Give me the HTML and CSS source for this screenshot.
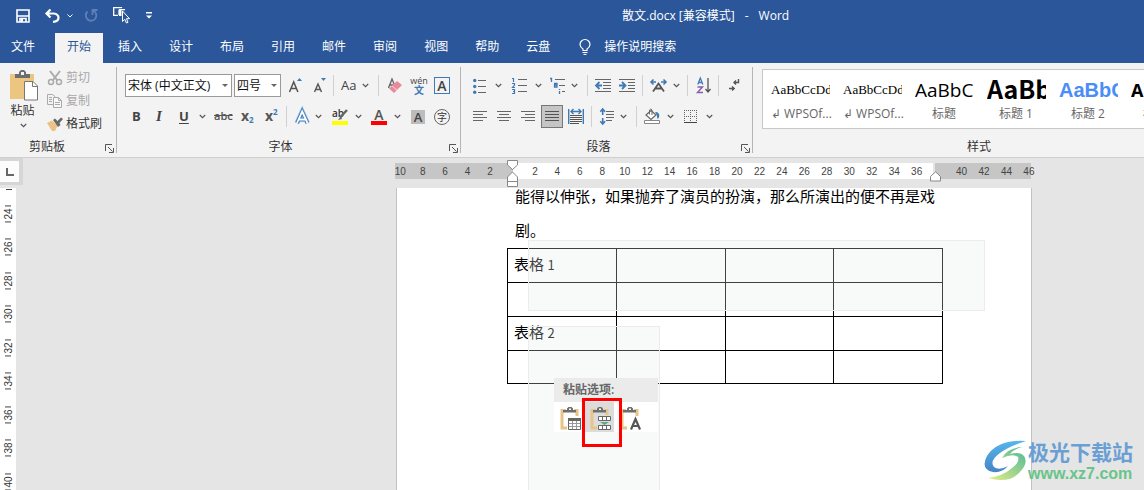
FILE: index.html
```html
<!DOCTYPE html>
<html lang="zh-CN">
<head>
<meta charset="utf-8">
<title>散文.docx - Word</title>
<link rel="stylesheet" href="styles.css">
</head>
<body>
<svg class="defs" aria-hidden="true">
  <symbol id="chev" viewBox="0 0 7 5"><path d="M.8 1l2.700 2.600L6.200 1" fill="none" stroke="#555" stroke-width="1.200"/></symbol>
  <symbol id="launch" viewBox="0 0 9 9"><path d="M.5 7V.5H7M3 3l4.500 4.500M8.500 4v4.500H4" fill="none" stroke="#555"/></symbol>
  <symbol id="clip" viewBox="0 0 22 24"><path d="M6 3.500H2v17.500H7M14 3.500h3V9" fill="none" stroke="#e9c487" stroke-width="3"/><path d="M3 5.500V3h4V1.500L8.500 0h3L13 1.500V3h3v2.500z" fill="#6e6e6e"/><path d="M9 1.500h2V3H9z" fill="#fff"/></symbol>
</svg>

<header class="top">
  <div class="titlebar">
    <div class="quick">
      <button aria-label="保存"><svg width="14" height="14" viewBox="0 0 14 14"><path d="M1 1h12v12H1z" fill="none" stroke="#fff" stroke-width="1.600"/><path d="M1 7h12M4 13v-3.500h6V13" fill="none" stroke="#fff" stroke-width="1.600"/><path d="M5 10h2v3H5z" fill="#fff"/></svg></button>
      <button aria-label="撤消"><svg width="15" height="14" viewBox="0 0 15 14"><path d="M5.500.5L1.500 4.500l4 4M2 4.500h6.500q5 .5 5 4.200T8 12.800" fill="none" stroke="#fff" stroke-width="2.200"/></svg></button>
      <button aria-label="撤消列表"><svg width="6" height="4" viewBox="0 0 6 4"><path d="M.5.5L3 3 5.500.5" fill="none" stroke="#fff"/></svg></button>
      <button aria-label="恢复"><svg width="15" height="15" viewBox="0 0 15 15"><path d="M9 2.500A5.300 5.300 0 1 1 3.500 3.500M8.500 7V2h5" fill="none" stroke="#5f80b5" stroke-width="1.800" transform="translate(-1 0)"/></svg></button>
      <button aria-label="选择对象"><svg width="17" height="17" viewBox="0 0 17 17"><path d="M8.500 1V.700H.700V8.300H5M6 2.700h6M6 2.700V8" fill="none" stroke="#fff" stroke-width="1.300"/><path d="M6 3h2.500v6H6z" fill="#fff"/><path d="M9.500 4v10.500l2.300-2.200 1.600 3.700 1.600-.7-1.500-3.600h3z" fill="#2b579a" stroke="#fff"/></svg></button>
      <button aria-label="自定义快速访问工具栏"><svg width="6" height="7" viewBox="0 0 6 7"><path d="M0 0h6v1.400H0zM0 3.500h6L3 6.500z" fill="#fff"/></svg></button>
    </div>
    <h1><span>散文.docx [兼容模式]</span><span>-</span><span>Word</span></h1>
  </div>
  <nav class="tabs">
    <button class="file">文件</button><button class="active">开始</button><button>插入</button><button>设计</button><button>布局</button><button>引用</button><button>邮件</button><button>审阅</button><button>视图</button><button>帮助</button><button>云盘</button>
    <button class="tell"><svg width="12" height="16" viewBox="0 0 12 16"><path d="M4 11.500V10Q1 8 1 5.500a5 5 0 0 1 10 0Q11 8 8 10v1.500z" fill="none" stroke="#fff" stroke-width="1.200"/><path d="M3.500 13.500h5M4.500 15.400h3" stroke="#fff"/></svg>操作说明搜索</button>
  </nav>
</header>

<section class="ribbon">
  <div class="group clipboard">
    <div class="clip-body">
      <button class="paste">
        <svg width="29" height="31" viewBox="0 0 29 31"><path d="M0 4h24v25H0z" fill="#ecc680"/><path d="M5 8V4h4V2l2-2h3l2 2v2h4v4z" fill="#6d6d6d"/><path d="M11 2h3v3h-3z" fill="#f3f3f3"/><path d="M14.500 11.500H23l4.500 4.500v14h-13z" fill="#fff" stroke="#777"/><path d="M22.500 12v4.500h5" fill="none" stroke="#777"/></svg>
        <span>粘贴</span>
        <svg class="chev" width="7" height="5"><use href="#chev"/></svg>
      </button>
      <div class="clip-list">
        <button disabled><svg width="16" height="16" viewBox="0 0 16 16"><path d="M3 1l7 9M13 1L6 10" stroke="#aaa" stroke-width="2"/><circle cx="4" cy="12" r="2.500" fill="none" stroke="#aaa" stroke-width="1.500"/><circle cx="12" cy="12" r="2.500" fill="none" stroke="#aaa" stroke-width="1.500"/></svg>剪切</button>
        <button disabled><svg width="16" height="16" viewBox="0 0 16 16"><path d="M6 11.500H.5V1.500h5L8.500 4M2 4.500h3M2 6.500h3M2 8.500h3" fill="none" stroke="#aaa"/><path d="M6.500 4.500h5l3 3v7h-8zM11.500 4.500v3h3M8 9.500h5M8 11.500h5" fill="#f8f8f8" stroke="#aaa"/></svg>复制</button>
        <button><svg width="16" height="14" viewBox="0 0 16 14"><path d="M0 6l5-2.500 5.500 5.500L8 14H5z" fill="#ecc286"/><path d="M6 3l2-1.500L10.500 4 14 .5 16 2l-3.500 4 1 2-2.500 2z" fill="#696969"/></svg>格式刷</button>
      </div>
    </div>
    <footer><span>剪贴板</span><button aria-label="剪贴板设置"><svg width="9" height="9"><use href="#launch"/></svg></button></footer>
  </div>

  <div class="group font">
    <div class="row font1">
      <label class="combo wide"><select aria-label="字体"><option>宋体 (中文正文)</option></select></label>
      <label class="combo size"><select aria-label="字号"><option>四号</option></select></label>
      <button aria-label="增大字号"><svg width="15" height="18" viewBox="0 0 15 18"><path d="M1.500 15L5.700 5l4.200 10M3 11.500h5.500" fill="none" stroke="#555" stroke-width="1.500"/><path d="M9 4h5l-2.500-3z" fill="#3f7ab5"/></svg></button>
      <button aria-label="减小字号"><svg width="15" height="18" viewBox="0 0 15 18"><path d="M1.500 15L5 7l3.500 8M3 12.500h4" fill="none" stroke="#555" stroke-width="1.400"/><path d="M8 1h5l-2.500 3z" fill="#3f7ab5"/></svg></button>
      <i class="sep"></i>
      <button class="case">Aa</button><button aria-label="大小写选项"><svg class="chev" width="7" height="5"><use href="#chev"/></svg></button>
      <i class="sep"></i>
      <button aria-label="清除格式"><svg width="16" height="17" viewBox="0 0 16 17"><path d="M1.500 11L5 2l2.500 6M3 8h3" fill="none" stroke="#666" stroke-width="1.400"/><path d="M2 11.500L10 4l5 4-8 8z" fill="#e88a99"/><path d="M5 9l5 4" stroke="#f8d8dc"/></svg></button>
      <button class="pinyin" aria-label="拼音指南"><span>wén</span><b>文</b></button>
      <button class="boxed" aria-label="字符边框">A</button>
    </div>
    <div class="row font2">
      <button class="bold">B</button><button class="ital">I</button><button class="under">U</button>
      <button aria-label="下划线选项"><svg class="chev" width="7" height="5"><use href="#chev"/></svg></button>
      <button class="strike">abc</button>
      <button class="script" aria-label="下标">x<sub>2</sub></button><button class="script" aria-label="上标">x<sup>2</sup></button>
      <i class="sep"></i>
      <button aria-label="文本效果"><svg width="15" height="16" viewBox="0 0 15 16"><path d="M2 14L7.200 2.500 12.500 14M4 10.500h6.500" fill="none" stroke="#9fc0e5" stroke-width="5"/><path d="M2 14L7.200 2.500 12.500 14M4 10.500h6.500" fill="none" stroke="#397abf" stroke-width="3.600"/><path d="M2 14L7.200 2.500 12.500 14M4 10.500h6.500" fill="none" stroke="#fff" stroke-width="1.800"/></svg></button>
      <button aria-label="文本效果选项"><svg class="chev" width="7" height="5"><use href="#chev"/></svg></button>
      <button class="hilite" aria-label="突出显示">ab<svg width="16" height="16" viewBox="0 0 16 16"><path d="M15 1L8 8.500" stroke="#666" stroke-width="2.500"/><path d="M9 7L6 11l4-1z" fill="#666"/><path d="M0 12h16v4H0z" fill="#ff0"/></svg></button>
      <button aria-label="突出显示选项"><svg class="chev" width="7" height="5"><use href="#chev"/></svg></button>
      <button class="color" aria-label="字体颜色">A</button>
      <button aria-label="字体颜色选项"><svg class="chev" width="7" height="5"><use href="#chev"/></svg></button>
      <button class="shade" aria-label="字符底纹">A</button>
      <button class="circle" aria-label="带圈字符">字</button>
    </div>
    <footer><span>字体</span><button aria-label="字体设置"><svg width="9" height="9"><use href="#launch"/></svg></button></footer>
  </div>

  <div class="group para">
    <div class="row para1">
      <button aria-label="项目符号"><svg width="14" height="16" viewBox="0 0 14 16"><g fill="#3f7ab5"><circle cx="1.700" cy="2.500" r="1.700"/><circle cx="1.700" cy="8.500" r="1.700"/><circle cx="1.700" cy="14.300" r="1.700"/></g><path d="M5 2.500h8M5 8.500h8M5 14.500h8" stroke="#666"/></svg></button>
      <button aria-label="项目符号选项"><svg class="chev" width="7" height="5"><use href="#chev"/></svg></button>
      <button aria-label="编号"><svg width="15" height="17" viewBox="0 0 15 17"><path d="M0 1.500h1.500V5M0 6.500h2.500v1.500L.5 10.500H3M0 12.500h2.500v4H0M1 14.500h1.500" fill="none" stroke="#3f7ab5" stroke-width="1.200"/><path d="M6 2.500h9M6 8.500h9M6 14.500h9" stroke="#666"/></svg></button>
      <button aria-label="编号选项"><svg class="chev" width="7" height="5"><use href="#chev"/></svg></button>
      <button aria-label="多级列表"><svg width="17" height="17" viewBox="0 0 17 17"><path d="M1 1.500h1.500V5M5 6.500h3V10H5.500V8H8M10.500 12v1M10.500 14v3" fill="none" stroke="#3f7ab5" stroke-width="1.300"/><path d="M6 2.500h10M10 8.500h6M13 14.500h3" stroke="#666"/></svg></button>
      <button aria-label="多级列表选项"><svg class="chev" width="7" height="5"><use href="#chev"/></svg></button>
      <i class="sep"></i>
      <button aria-label="减少缩进"><svg width="17" height="13" viewBox="0 0 17 13"><path d="M0 .5h16M8 3.500h8M8 6.500h8M8 9.500h8M0 12.500h16" stroke="#666"/><path d="M7 6.500H1.500M4.500 3L1 6.500 4.500 10" fill="none" stroke="#3f7ab5" stroke-width="1.800"/></svg></button>
      <button aria-label="增加缩进"><svg width="17" height="13" viewBox="0 0 17 13"><path d="M0 .5h16M9 3.500h7M9 6.500h7M9 9.500h7M0 12.500h16" stroke="#666"/><path d="M0 6.500h6M3 3l3.500 3.500L3 10" fill="none" stroke="#3f7ab5" stroke-width="1.800"/></svg></button>
      <i class="sep"></i>
      <button aria-label="中文版式"><svg width="17" height="13" viewBox="0 0 17 13"><path d="M3 12.500L8.500 4.500l5.500 8M5 9.500h7" fill="none" stroke="#555" stroke-width="1.800"/><path d="M1 3h5M3.500.5L1 3l2.500 2.500M16 3h-5M13.500.5L16 3l-2.500 2.500" fill="none" stroke="#3f7ab5" stroke-width="1.600"/></svg></button>
      <button aria-label="中文版式选项"><svg class="chev" width="7" height="5"><use href="#chev"/></svg></button>
      <i class="sep"></i>
      <button aria-label="排序"><svg width="15" height="17" viewBox="0 0 15 17"><path d="M.8 7.500L3.300 1l2.500 6.500M1.500 5.500H5" fill="none" stroke="#3f7ab5" stroke-width="1.300"/><path d="M.5 10h5l-5 5.500h5.500" fill="none" stroke="#8a5bb0" stroke-width="1.400"/><path d="M11 1v14M8.500 12l2.500 3 2.500-3" fill="none" stroke="#555" stroke-width="1.300"/></svg></button>
      <i class="sep"></i>
      <button aria-label="显示编辑标记"><svg width="12" height="13" viewBox="0 0 12 13"><path d="M9.500 0v3.500H5M7 1.500l-2 2 2 2M0 9.500h5M3 7.500l2.200 2L3 11.500" fill="none" stroke="#555" stroke-width="1.400"/></svg></button>
    </div>
    <div class="row para2">
      <button aria-label="左对齐"><svg width="14" height="11" viewBox="0 0 14 11"><path d="M0 .5h14M0 3.500h10M0 6.500h14M0 9.500h10" stroke="#666"/></svg></button>
      <button aria-label="居中"><svg width="14" height="11" viewBox="0 0 14 11"><path d="M0 .5h14M2 3.500h10M0 6.500h14M2 9.500h10" stroke="#666"/></svg></button>
      <button aria-label="右对齐"><svg width="14" height="11" viewBox="0 0 14 11"><path d="M0 .5h14M4 3.500h10M0 6.500h14M4 9.500h10" stroke="#666"/></svg></button>
      <button class="selected" aria-label="两端对齐"><svg width="14" height="11" viewBox="0 0 14 11"><path d="M0 .5h14M0 3.500h14M0 6.500h14M0 9.500h14" stroke="#555"/></svg></button>
      <button aria-label="分散对齐"><svg width="17" height="15" viewBox="0 0 17 15"><path d="M.7 0v15M15.300 0v15M3 2.500h10M5.500 0L3 2.500 5.500 5M10.500 0L13 2.500 10.500 5" fill="none" stroke="#3f7ab5" stroke-width="1.400"/><path d="M2 6.500h12M2 8.500h12M2 10.500h12M2 12.500h12M2 14.500h9" stroke="#555"/></svg></button>
      <i class="sep"></i>
      <button aria-label="行距"><svg width="15" height="15" viewBox="0 0 15 15"><path d="M2.700 0v6M.3 2.700L2.700 0l2.400 2.700M2.700 9v6M.3 12.300L2.700 15l2.400-2.700" fill="none" stroke="#3f7ab5" stroke-width="1.600"/><path d="M6 2.500h8M6 5.500h8M6 8.500h8M6 11.500h6" stroke="#666"/></svg></button>
      <button aria-label="行距选项"><svg class="chev" width="7" height="5"><use href="#chev"/></svg></button>
      <i class="sep"></i>
      <button aria-label="底纹"><svg width="17" height="15" viewBox="0 0 17 15"><path d="M2 6L7 1.500l5 4.500-5 4.500z" fill="#fff" stroke="#666" stroke-width="1.200"/><path d="M5.500 5.500V1Q6.500-1 8 1v5" fill="none" stroke="#666"/><path d="M11 3q5.500 0 4 5.500L13.500 10Q13.500 6 11 3z" fill="#3f7ab5"/><path d="M.5 11.500h15v3H.5z" fill="#fff" stroke="#888"/></svg></button>
      <button aria-label="底纹选项"><svg class="chev" width="7" height="5"><use href="#chev"/></svg></button>
      <button aria-label="边框"><svg width="13" height="13" viewBox="0 0 13 13"><path d="M0 .5h13M0 6.500h13M.5 0v12M6.500 0v12M12.500 0v12" stroke="#666" stroke-dasharray="1 1"/><path d="M0 12.500h13" stroke="#444"/></svg></button>
      <button aria-label="边框选项"><svg class="chev" width="7" height="5"><use href="#chev"/></svg></button>
    </div>
    <footer><span>段落</span><button aria-label="段落设置"><svg width="9" height="9"><use href="#launch"/></svg></button></footer>
  </div>

  <div class="group styles">
    <div class="gallery">
      <button><span class="sample serif">AaBbCcDd</span><span class="name">↲ WPSOf...</span></button>
      <button><span class="sample serif">AaBbCcDd</span><span class="name">↲ WPSOf...</span></button>
      <button><span class="sample title">AaBbC</span><span class="name">标题</span></button>
      <button><span class="sample h1">AaBb</span><span class="name">标题 1</span></button>
      <button><span class="sample h2">AaBbC</span><span class="name">标题 2</span></button>
      <button><span class="sample h3">AaBbC</span><span class="name">标题 3</span></button>
    </div>
    <footer><span>样式</span></footer>
  </div>
</section>

<main class="work">
  <aside class="left">
    <button class="tabsel" aria-label="制表符"></button>
    <div class="vruler"><ol><li>24</li><li>26</li><li>28</li><li>30</li><li>32</li><li>34</li><li>36</li><li>38</li><li>40</li></ol></div>
  </aside>
  <div class="canvas">
    <div class="hruler">
      <ol><li>10</li><li>8</li><li>6</li><li>4</li><li>2</li><li></li><li>2</li><li>4</li><li>6</li><li>8</li><li>10</li><li>12</li><li>14</li><li>16</li><li>18</li><li>20</li><li>22</li><li>24</li><li>26</li><li>28</li><li>30</li><li>32</li><li>34</li><li>36</li><li></li><li>40</li><li>42</li><li>44</li><li>46</li></ol>
      <svg class="indent-left" width="12" height="28" viewBox="0 0 12 28"><path d="M.5.5h10V5l-5 4.500L.5 5zM5.500 12l5 5v4.500H.5V17zM.5 21.500h10v5H.5z" fill="#fff" stroke="#888"/></svg>
      <svg class="indent-right" width="12" height="11" viewBox="0 0 12 11"><path d="M5.500.8l5 4.700v4.500H.5V5.500z" fill="#fff" stroke="#888"/></svg>
    </div>
    <article class="page">
      <div class="content">
        <p>能得以伸张，如果抛弃了演员的扮演，那么所演出的便不再是戏剧。</p>
        <table>
          <tr><td>表格 <span>1</span></td><td></td><td></td><td></td></tr>
          <tr><td></td><td></td><td></td><td></td></tr>
          <tr><td>表格 <span>2</span></td><td></td><td></td><td></td></tr>
          <tr><td></td><td></td><td></td><td></td></tr>
        </table>
      </div>
      <div class="veil one"></div>
      <div class="veil two"></div>
      <div class="popup">
        <h2>粘贴选项:</h2>
        <div class="options">
          <button aria-label="嵌套表"><svg width="22" height="24" viewBox="0 0 22 24"><use href="#clip" width="22" height="24"/><path d="M7 10h14v14H7z" fill="#fff"/><path d="M8.500 11.500h12v11h-12z" fill="#fff" stroke="#666"/><path d="M8 11h13v3H8z" fill="#666"/><path d="M9 16.500h11M9 19.500h11M12.500 14v8M16.500 14v8" stroke="#999"/></svg></button>
          <button class="on" aria-label="插入为新行"><svg width="22" height="24" viewBox="0 0 22 24"><use href="#clip" width="22" height="24"/><path d="M7 8h14v16H7z" fill="#dcdcdc"/><path d="M8.500 9.500h12v4h-12zM12.500 9.500v4M16.500 9.500v4M8.500 18.500h12v4h-12zM12.500 18.500v4M16.500 18.500v4" fill="#fff" stroke="#666"/><path d="M10 15h9l-4.500 3z" fill="#5aa58c"/></svg></button>
          <button aria-label="只保留文本"><svg width="22" height="24" viewBox="0 0 22 24"><use href="#clip" width="22" height="24"/><path d="M8 9h14v15H8z" fill="#fff"/><path d="M11 22.500L15.500 12 20 22.500M12.500 19h6" fill="none" stroke="#555" stroke-width="2.200"/></svg></button>
        </div>
      </div>
      <div class="mark"></div>
    </article>
  </div>
  <div class="brand">
    <svg width="44" height="44" viewBox="0 0 44 44"><defs><linearGradient id="g" x1="0" y1="0" x2="0" y2="1"><stop offset="0" stop-color="#55b7ea"/><stop offset="1" stop-color="#4585c8"/></linearGradient><linearGradient id="h" x1="1" y1="0" x2="0" y2="1"><stop offset="0" stop-color="#4db79a"/><stop offset="1" stop-color="#e5ed86"/></linearGradient></defs><path d="M42 2Q14 0 3 17q-7 13 6 16 9 1 15-6-9 5-14 1-5-6 6-14Q25 7 42 2z" fill="url(#g)"/><path d="M38 8q-15 1-20 11 11-5 16-1 2 5-6 11-9 8-24 10 20 6 31-5 10-10 5-17-4-5-14-2 4-5 12-7z" fill="url(#h)"/></svg>
    <div><strong>极光下载站</strong><span>www.xz7.com</span></div>
  </div>
</main>
</body>
</html>
```
FILE: styles.css
```css
* { box-sizing: border-box; }
html, body { height: 100%; }
body {
  margin: 0;
  display: flex;
  flex-direction: column;
  overflow: hidden;
  font: 12px/16px "Open Sans", "Noto Sans CJK SC", sans-serif;
  color: #333;
  background: #e5e5e5;
}
button { font: inherit; color: inherit; background: none; border: 0; padding: 0; margin: 0; }
svg { display: block; flex: none; overflow: visible; }
ol { list-style: none; margin: 0; padding: 0; }
.defs { position: absolute; width: 0; height: 0; }

/* title bar and tabs */
.top { background: #2b579a; color: #fff; flex: none; }
.titlebar { display: flex; height: 33px; align-items: center; padding-bottom: 2px; }
.quick { display: grid; grid-template-columns: 29px 22px 18px 28px 33px 16px; padding-left: 16px; width: 622px; align-items: center; }
.titlebar h1 { display: flex; gap: 10px; font-size: 12px; font-weight: 400; margin: 0; white-space: nowrap; }
.tabs { display: flex; height: 30px; gap: 3px; }
.tabs button { padding: 0 12px 3px; white-space: nowrap; }
.tabs .file { padding: 0 17px 3px 11px; }
.tabs .active { background: #f3f3f3; color: #2b579a; }
.tabs .tell { display: flex; align-items: center; gap: 13px; padding-left: 14px; }

/* ribbon */
.ribbon { display: flex; flex: none; height: 95px; overflow: hidden; background: #f3f3f3; border-bottom: 1px solid #cfcfcf; }
.group { display: flex; flex-direction: column; flex: none; padding-top: 11px; position: relative; }
.group::after { content: ""; position: absolute; right: 0; top: 4px; bottom: 4px; width: 1px; background: #b5b5b5; }
.group footer { display: flex; margin-top: auto; height: 20px; padding-top: 2px; text-align: center; }
.group footer span { flex: 1; }
.group footer button { width: 17px; padding-left: 5px; }
.clipboard { width: 117px; padding-top: 7px; }
.clipboard footer span { padding-right: 6px; }
.font { width: 344px; }
.para { width: 292px; }
.styles { width: 443px; padding: 6px 0 0 9px; }
.clip-body { display: grid; grid-template-columns: 37px 1fr; padding-left: 10px; }
.paste { display: flex; flex-direction: column; align-items: center; width: 29px; }
.paste span { margin: 2px 4px 4px 0; }
.paste .chev { margin-right: 2px; }
.clip-list { display: flex; flex-direction: column; gap: 7px; }
.clip-list button { display: flex; align-items: center; gap: 3px; height: 16px; white-space: nowrap; }
.clip-list button:disabled { color: #a8a8a8; }
.row { display: grid; height: 23px; align-items: center; justify-items: start; }
.row + .row { margin-top: 8px; }
.row button { display: flex; align-items: center; }
.font1 { grid-template-columns: 109px 54px 25px 20px 8px 21px 16px 9px 23px 24px 18px; padding-left: 8px; }
.font2 { grid-template-columns: 24px 23px 20px 15px 27px 24px 21px 9px 20px 17px 23px 16px 23px 17px 23px 18px; padding-left: 15px; }
.para1 { grid-template-columns: 22px 17px 23px 14px 22px 16px 8px 24px 23px 8px 23px 14px 10px 21px 11px 16px; padding-left: 12px; }
.para2 { grid-template-columns: 24px 24px 20px 27px 23px 9px 20px 16px 8px 23px 17px 22px 8px; padding-left: 12px; }
.sep { width: 1px; height: 21px; background: #d0d0d0; }
.combo { position: relative; height: 23px; }
.combo select { appearance: none; width: 100%; height: 23px; border: 1px solid #999; border-radius: 0; background: #fff; color: #111; font: inherit; padding: 0 2px; }
.combo::after { content: ""; position: absolute; right: 4px; top: 10px; border: 3px solid transparent; border-top-color: #666; border-bottom: 0; }
.wide { width: 107px; }
.size { width: 47px; }
.row .case { font-size: 13px; color: #444; padding-bottom: 2px; }
.row .pinyin { display: block; width: 18px; color: #444; }
.pinyin span, .pinyin b { display: block; font-size: 9px; line-height: 9px; text-align: center; }
.pinyin b { line-height: 10px; font-size: 10px; color: #3f7ab5; }
.row .boxed { width: 16px; height: 17px; justify-content: center; border: 1px solid #3f7ab5; font-size: 14px; font-weight: 600; color: #444; }
.row .bold, .row .ital, .row .under { color: #444; font-weight: 700; font-size: 13px; padding-bottom: 2px; }
.row .ital { font-family: "Liberation Serif", serif; font-style: italic; font-size: 15px; }
.under { text-decoration: underline; text-underline-offset: 2px; }
.row .strike { text-decoration: line-through; font-size: 11px; font-weight: 600; color: #555; padding-bottom: 1px; }
.row .script { font-size: 14px; font-weight: 700; color: #555; padding-bottom: 2px; }
.script sub, .script sup { font-size: 8px; line-height: 8px; color: #3f7ab5; }
.script sub { align-self: flex-end; }
.script sup { align-self: flex-start; }
.row .hilite { position: relative; width: 16px; height: 16px; align-items: flex-start; font-size: 10px; line-height: 9px; font-weight: 600; }
.hilite svg { position: absolute; inset: 0; }
.row .color { width: 16px; height: 16px; justify-content: center; border-bottom: 4px solid #f00; font-size: 14px; line-height: 12px; font-weight: 600; color: #555; }
.row .shade { width: 14px; height: 14px; justify-content: center; background: #bcbcbc; font-size: 13px; font-weight: 600; color: #444; }
.row .circle { width: 16px; height: 16px; justify-content: center; border: 1px solid #666; border-radius: 50%; font-size: 10px; }
.row .selected { width: 22px; height: 23px; justify-content: center; background: #c5c5c5; border: 1px solid #777; }

/* style gallery */
.gallery { display: grid; grid-template-columns: repeat(6, 72px); height: 60px; background: #fff; border: 1px solid #c8c8c8; }
.gallery button { padding: 0 6px 0 8px; display: flex; flex-direction: column; min-width: 0; }
.sample { width: 59px; height: 36px; line-height: 40px; overflow: hidden; text-align: left; color: #000; white-space: nowrap; }
.serif { font-family: "Liberation Serif", serif; font-size: 13px; }
.title { font-size: 19px; }
.h1 { font: 700 25px/36px "Noto Sans CJK SC", sans-serif; }
.h2 { font: 700 20px/40px "Liberation Sans", sans-serif; color: #4a8df8; }
.h3 { font-size: 18px; font-weight: 700; }
.name { width: 58px; text-align: center; color: #666; white-space: nowrap; }

/* workspace */
.work { flex: 1; display: flex; min-height: 0; position: relative; }
.left { display: flex; flex-direction: column; width: 23px; flex: none; }
.tabsel { width: 23px; height: 27px; flex: none; background: #fcfcfc; border: solid #d6d6d6; border-width: 3px 4px 3px 0; display: grid; place-items: center; }
.tabsel::before { content: ""; width: 6px; height: 6px; border: solid #666; border-width: 0 0 2px 2px; }
.vruler { width: 16px; flex: 1; margin-top: 3px; background: #fff; overflow: hidden; position: relative; }
.vruler::before { content: ""; position: absolute; left: 6px; top: 1px; width: 6px; height: 1px; background: #444; }
.vruler ol { display: flex; flex-direction: column; height: 301px; margin: 9px 0 0 1px; }
.vruler li { flex: 1; display: flex; flex-direction: row; align-items: center; justify-content: space-between; writing-mode: vertical-rl; transform: rotate(180deg); font: 10px/16px "Liberation Sans", sans-serif; color: #333; padding: 8px 0; }
.vruler li::before, .vruler li::after { content: ""; width: 6px; height: 1px; background: #444; }
.canvas { flex: 1; min-width: 0; display: flex; flex-direction: column; padding: 5px 0 0 366px; }
.hruler { position: relative; width: 651px; height: 16px; flex: none; background: linear-gradient(90deg, transparent 6px, #c6c6c6 6px 124px, #fff 124px 544px, #e5e5e5 544px 546px, #c6c6c6 546px 642px, transparent 642px); }
.hruler ol { display: flex; }
.hruler li { flex: 1; text-align: center; font: 10px/17px "Liberation Sans", sans-serif; color: #444; }
.indent-left { position: absolute; left: 118px; top: -3px; }
.indent-right { position: absolute; left: 541px; top: 8px; }
.page { position: relative; flex: 1; min-height: 0; width: 636px; margin: 9px 0 0 7px; background: #fff; border: solid #c2c2c2; border-width: 0 1px; overflow: hidden; }
.content { padding: 0 88px 0 110px; margin-top: -9px; }
.content p { margin: 0 0 1px; padding: 0 7px 0 8px; font: 15px/34px "Noto Sans CJK SC", sans-serif; color: #000; }
table { border-collapse: collapse; width: 436px; table-layout: fixed; font: 15px/30px "Noto Sans CJK SC", sans-serif; color: #000; }
td { border: 1px solid #000; height: 34px; padding: 0 6px 2px; }
td span { font-size: 13px; }
tr:last-child td { height: 33px; }
.veil { position: absolute; background: rgba(230, 237, 233, 0.28); border: 1px solid #ececec; }
.one { left: 131px; top: 52px; width: 457px; height: 71px; }
.two { left: 131px; top: 138px; width: 132px; bottom: -1px; }
.popup { position: absolute; left: 157px; top: 190px; width: 104px; background: #fff; }
.popup h2 { margin: 0; padding: 0 9px; font-size: 12px; line-height: 24px; font-weight: 600; color: #666; background: #ebebeb; }
.options { display: flex; height: 30px; }
.options button { width: 30px; padding: 4px 0 0 6px; }
.options .on { background: #dcdcdc; }
.mark { position: absolute; left: 185px; top: 210px; width: 40px; height: 49px; border: 3px solid #f00; }
.brand { position: absolute; right: 11px; bottom: 7px; display: flex; }
.brand strong { display: block; font-size: 21px; line-height: 26px; color: #6a9fd4; }
.brand span { display: block; font: 700 16px/18px "Liberation Sans", sans-serif; color: #69c48a; }
```
